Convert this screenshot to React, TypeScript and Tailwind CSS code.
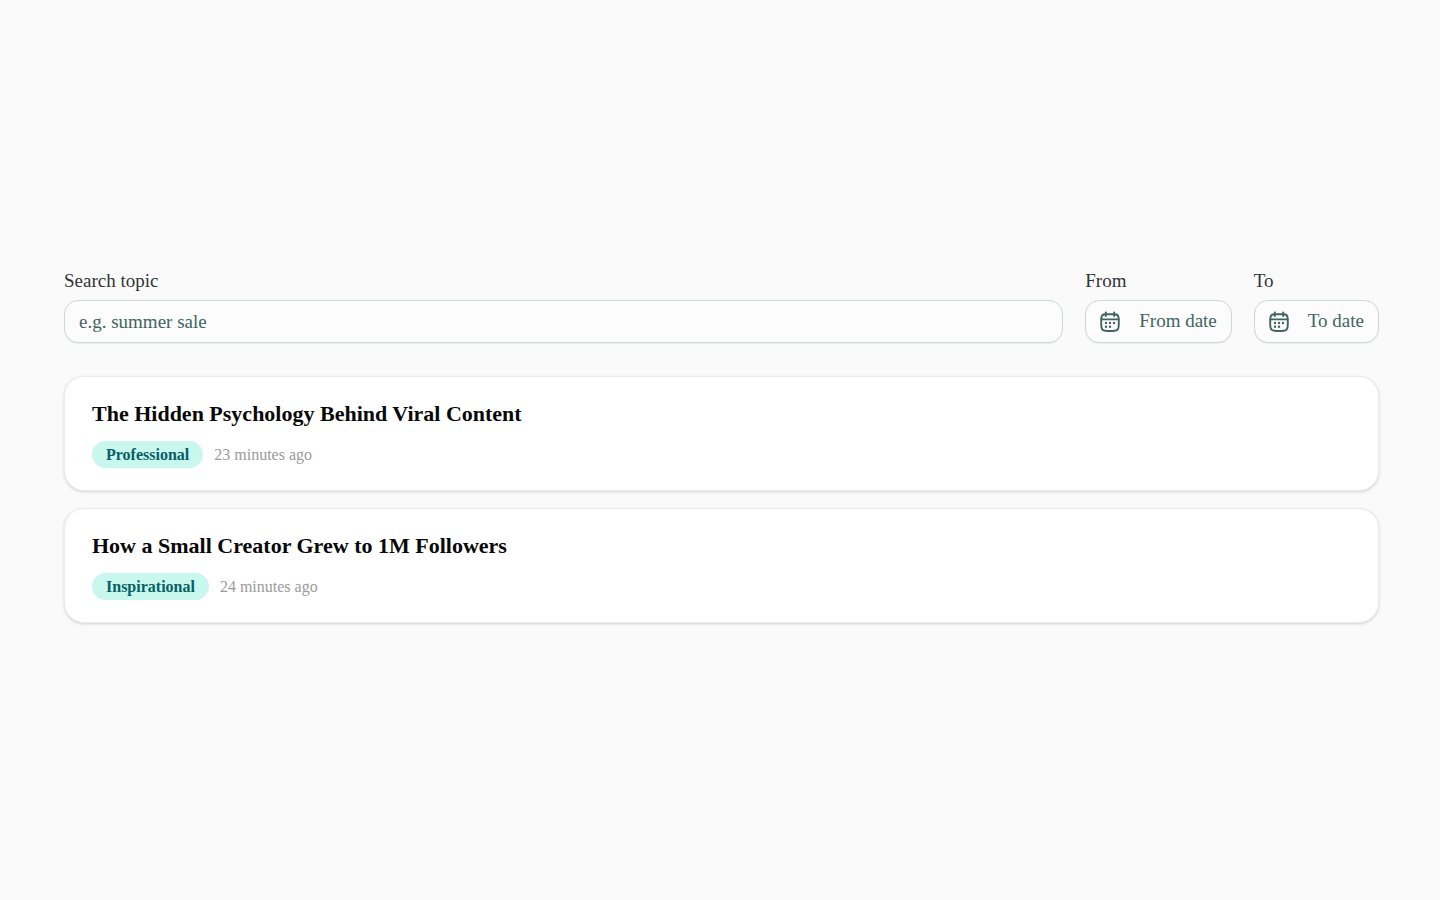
const posts = [
  { title: "The Hidden Psychology Behind Viral Content", tone: "Professional", age: "23 minutes ago" },
  { title: "How a Small Creator Grew to 1M Followers", tone: "Inspirational", age: "24 minutes ago" },
];

const fieldClass = "h-[43px] rounded-[14px] border border-[#cdd8d5] bg-[#fbfcfb] px-[14px] text-[19px] shadow-[0_1px_1px_rgba(0,0,0,0.05)]";

function CalendarIcon() {
  return (
    <svg width="20" height="22" viewBox="0 0 20 22" fill="none" stroke="currentColor" strokeWidth="1.9" strokeLinecap="round" aria-hidden="true">
      <path d="M5.200 3.200h9.600c2.500 0 3.600 1.200 3.800 3.400.3 3.300.3 6.400 0 9.200-.3 2.500-1.400 3.700-3.800 3.900-3.200.3-6.400.3-9.600 0-2.400-.2-3.500-1.400-3.800-3.900-.3-2.800-.3-5.900 0-9.200.2-2.200 1.300-3.400 3.800-3.400Z" />
      <path d="M1.400 8.400h17.200M5.800 1.400v3.600M14.200 1.400v3.600" />
      <g fill="currentColor" stroke="none">
        <circle cx="6" cy="12" r="1.2" />
        <circle cx="10" cy="12" r="1.2" />
        <circle cx="14" cy="12" r="1.2" />
        <circle cx="6" cy="15.7" r="1.2" />
        <circle cx="10" cy="15.7" r="1.2" />
      </g>
    </svg>
  );
}

function DateField({ id, label, placeholder }: { id: string; label: string; placeholder: string }) {
  return (
    <div className="flex flex-col gap-[7px]">
      <label htmlFor={id} className="text-[19px] leading-6 text-[#303437]">{label}</label>
      <button id={id} type="button" className={`${fieldClass} flex items-center gap-[19px] whitespace-nowrap text-[#416660]`}>
        <CalendarIcon />
        {placeholder}
      </button>
    </div>
  );
}

export default function App() {
  return (
    <main className="flex min-h-screen flex-col justify-center bg-[#fafafa] pb-2 pl-16 pr-[61px] font-['Liberation_Serif',serif]">
      <form className="flex gap-[22px]" onSubmit={(event) => event.preventDefault()}>
        <div className="flex min-w-0 flex-1 flex-col gap-[7px]">
          <label htmlFor="topic" className="text-[19px] leading-6 text-[#303437]">Search topic</label>
          <input id="topic" type="text" placeholder="e.g. summer sale" className={`${fieldClass} w-full text-[#303437] placeholder:text-[#416660]`} />
        </div>
        <DateField id="from" label="From" placeholder="From date" />
        <DateField id="to" label="To" placeholder="To date" />
      </form>

      <section className="mt-[33px] flex flex-col gap-[17px]">
        {posts.map((post) => (
          <article key={post.title} className="rounded-[20px] border border-[#ebebeb] bg-white px-[27px] pb-[22px] pt-[23px] shadow-[0_1px_3px_rgba(0,0,0,0.16)]">
            <h2 className="text-[22px] font-bold leading-7 text-[#090909]">{post.title}</h2>
            <div className="mt-[13px] flex items-center gap-[11px] text-[16px] leading-[27px]">
              <span className="rounded-full bg-[#c8f7ee] px-[14px] font-bold text-[#075f64]">{post.tone}</span>
              <time className="text-[#9b9b9b]">{post.age}</time>
            </div>
          </article>
        ))}
      </section>
    </main>
  );
}
